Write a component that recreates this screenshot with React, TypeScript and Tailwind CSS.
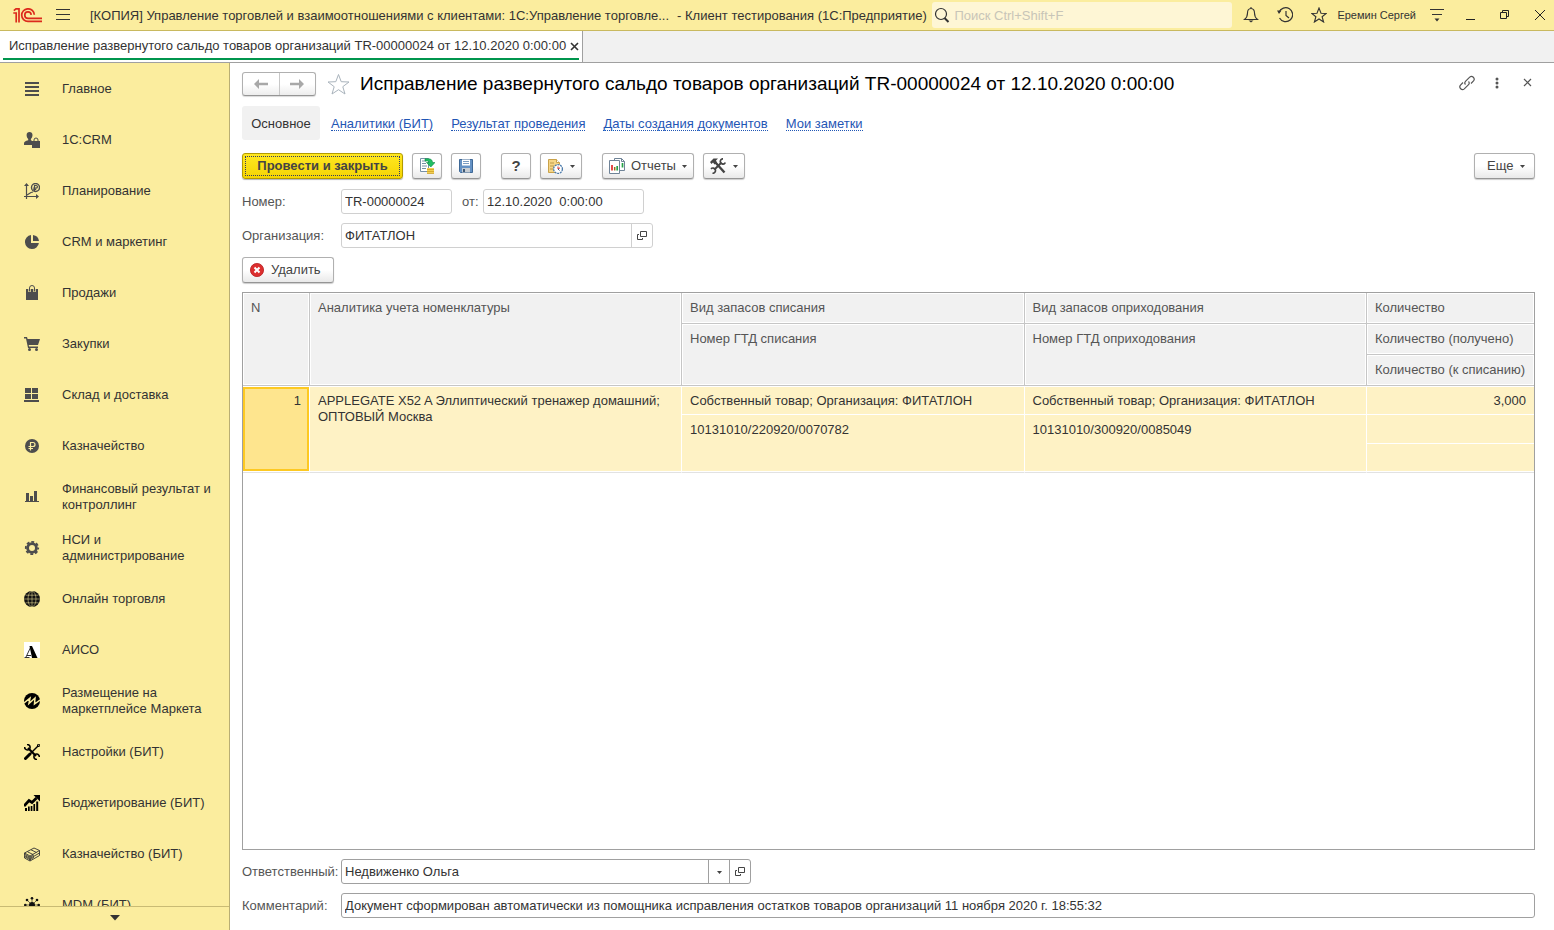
import type { ReactNode } from "react";

const ink = "#4d4d4d";

function Svg({ children, w = 16, h = 16 }: { children: ReactNode; w?: number; h?: number }) {
  return (
    <svg width={w} height={h} viewBox={`0 0 ${w} ${h}`} fill="none" className="shrink-0" aria-hidden="true">
      {children}
    </svg>
  );
}

const sections: { label: string; icon: ReactNode }[] = [
  {
    label: "Главное",
    icon: <path d="M1 1h14v2H1zM1 5h14v2H1zM1 9h14v2H1zM1 13h14v2H1z" fill={ink} />,
  },
  {
    label: "1С:CRM",
    icon: (
      <>
        <path d="M5.500 0C7.300 0 8.500 1.200 8.500 3S7.600 6.300 6.900 7v1.300l1.100.5V13H0v-1.600C0 9.800 1.500 9 4.200 8.300V7C3.400 6.300 2.600 4.800 2.600 3S3.800 0 5.500 0z" fill={ink} />
        <path d="M8 9h8v7H8z" fill={ink} />
        <path d="M10 10V8a2 2 0 0 1 4 0v2" stroke={ink} />
      </>
    ),
  },
  {
    label: "Планирование",
    icon: (
      <>
        <path d="M2.500 16V2M0 13.500h14M3 12l4-2.500 2-.5" stroke={ink} strokeWidth="1.200" />
        <path d="M0 3l2.500-3L5 3zM12 11l3 2.500-3 2.500z" fill={ink} />
        <circle cx="11.500" cy="4.500" r="4" stroke={ink} strokeWidth="1.400" />
        <path d="M10.500 8V2.500h1.600a1.300 1.300 0 0 1 0 2.700H9.200M9.200 6.500h3" stroke={ink} strokeWidth="1.200" />
      </>
    ),
  },
  {
    label: "CRM и маркетинг",
    icon: (
      <>
        <path d="M7 1.100V9h7.900A7 7 0 1 1 7 1.100z" fill={ink} />
        <path d="M9 1a7 7 0 0 1 6 6H9z" fill={ink} />
      </>
    ),
  },
  {
    label: "Продажи",
    icon: (
      <>
        <path d="M2 4h12v11H2z" fill={ink} />
        <path d="M5.500 7V3a2.500 2.500 0 0 1 5 0V7" stroke="#fbed9e" strokeWidth="2.400" />
        <path d="M5.500 6.500V3a2.500 2.500 0 0 1 5 0v3.500" stroke={ink} />
      </>
    ),
  },
  {
    label: "Закупки",
    icon: (
      <>
        <path d="M0 1h3l.6 2H16l-2 6H4.700l.4 1.500H14V12H4L2 2.500H0z" fill={ink} />
        <circle cx="5.500" cy="13.500" r="1.500" fill={ink} />
        <circle cx="12.500" cy="13.500" r="1.500" fill={ink} />
      </>
    ),
  },
  {
    label: "Склад и доставка",
    icon: <path d="M1 1h6v5H1zM8 1h6v5H8zM1 7h6v5H1zM8 7h6v5H8zM0 13h15v2H0z" fill={ink} />,
  },
  {
    label: "Казначейство",
    icon: (
      <>
        <circle cx="8" cy="8" r="7" fill={ink} />
        <path d="M6.500 12.500V4.500H9a2 2 0 0 1 0 4H4.500M4.500 10.500H9" stroke="#fbed9e" strokeWidth="1.200" />
      </>
    ),
  },
  {
    label: "Финансовый результат и контроллинг",
    icon: <path d="M2 4h3v8H2zM6 7h3v5H6zM10 2h3v10h-3zM1 12h14v1H1z" fill={ink} />,
  },
  {
    label: "НСИ и администрирование",
    icon: (
      <>
        <circle cx="8" cy="8" r="4.400" stroke={ink} strokeWidth="2.800" />
        <circle cx="8" cy="8" r="6.200" stroke={ink} strokeWidth="1.800" strokeDasharray="2.900 1.970" strokeDashoffset="1.450" />
      </>
    ),
  },
  {
    label: "Онлайн торговля",
    icon: (
      <>
        <circle cx="8" cy="8" r="8" fill="#111" />
        <path d="M0 8h16M1.500 4.200h13M1.500 11.800h13M8 0v16" stroke="#fbed9e" strokeWidth=".5" />
        <ellipse cx="8" cy="8" rx="4" ry="7.800" stroke="#fbed9e" strokeWidth=".5" />
      </>
    ),
  },
  {
    label: "АИСО",
    icon: (
      <>
        <path d="M0 0h16v16H0z" fill="#fff" />
        <path d="M5.500 4H8l5.500 12H8z" fill="#000" />
        <path d="M6.500 5.500L2 15M.5 15.500h5M3 13.500h4" stroke="#000" strokeWidth=".8" />
      </>
    ),
  },
  {
    label: "Размещение на маркетплейсе Маркета",
    icon: (
      <>
        <circle cx="8" cy="8" r="8" fill="#000" />
        <path d="M0 10L6 5.200 5 10.500 11 5l-.5 6L16 7" stroke="#fbed9e" strokeWidth="1.500" />
      </>
    ),
  },
  {
    label: "Настройки (БИТ)",
    icon: (
      <>
        <path d="M1.500 14.500L6 10" stroke="#000" strokeWidth="3" strokeLinecap="round" />
        <path d="M6 10L14 2" stroke="#000" strokeWidth="1.500" />
        <path d="M13 1l2.500-.5L15 3z" stroke="#000" />
        <path d="M4 4l8 8" stroke="#000" strokeWidth="2.200" />
        <path d="M3 .6a2.700 2.700 0 1 1-2.300 2.400M13 15.400a2.700 2.700 0 1 1 2.300-2.400" stroke="#000" strokeWidth="1.600" />
      </>
    ),
  },
  {
    label: "Бюджетирование (БИТ)",
    icon: (
      <>
        <path d="M0 11l5-5.500 3 2L12.500 3" stroke="#000" strokeWidth="2.800" />
        <path d="M9.500 0H16v6.500z" fill="#000" />
        <path d="M1 13h2v3H1zM4 11.500h1.700V16H4zM6.700 11h1.700v5H6.700zM9.400 9h1.700v7H9.400zM12.200 6.500h2V16h-2z" fill="#000" />
      </>
    ),
  },
  {
    label: "Казначейство (БИТ)",
    icon: (
      <path
        d="M.5 7L10 2l5.500 2.500L6 10zM.5 7v2.500L6 12.500l9.500-5.500V4.500M.5 9.500V12L6 15l9.500-5.500V7M6 10v5M3.500 5.800L9 8.500M7 3.800L12.500 6.500M1 8.500l5 2.700 4-2.300M1 10.800l5 2.900 4-2.400"
        stroke="#333"
        strokeWidth=".9"
      />
    ),
  },
  {
    label: "MDM (БИТ)",
    icon: (
      <>
        <circle cx="8" cy="8" r="3" fill="#111" />
        <path d="M8 1v14M1 8h14M3 3l10 10M13 3L3 13" stroke="#111" strokeWidth=".6" />
        <circle cx="8" cy="1.300" r="1.300" fill="#111" />
        <circle cx="3" cy="3" r="1.300" fill="#111" />
        <circle cx="13" cy="3" r="1.300" fill="#111" />
        <circle cx="1.300" cy="8" r="1.300" fill="#111" />
        <circle cx="14.700" cy="8" r="1.300" fill="#111" />
      </>
    ),
  },
];

const buttonBase =
  "flex h-[26px] items-center rounded-[3px] border border-[#b0b0b0] border-b-[#959595] bg-linear-to-b from-white from-50% to-[#e9e9e9] text-[#444] shadow-[0_1px_1px_rgba(0,0,0,0.2)]";

function Caret() {
  return (
    <Svg w={7} h={6}>
      <path d="M1 2h5L3.500 5z" fill="#444" />
    </Svg>
  );
}

function OpenIcon() {
  return (
    <Svg w={10} h={10}>
      <path d="M3.500.5h6v5h-6zM2 3.500H.5v5h5V7" stroke="#444" />
    </Svg>
  );
}

function TitleBar() {
  return (
    <header className="flex h-[31px] shrink-0 items-center border-b border-[#c9b95f] bg-[#fbed9e] pl-[13px] pr-2 text-[#333]">
      <Svg w={30} h={15}>
        <path d="M.3 5h2.900v9.500M.8 2.600L3 .9h3v13.600M21.300 6.800A6.300 6.300 0 1 0 15 13.400h14M18.200 6.900A3.200 3.200 0 1 0 15 10.300h14" stroke="#dc2a1c" strokeWidth="1.700" />
      </Svg>
      <button type="button" aria-label="Меню" className="ml-[13px] mr-5">
        <Svg w={14} h={12}>
          <path d="M0 .5h14M0 5.500h14M0 10.500h14" stroke="#333" />
        </Svg>
      </button>
      <div className="flex gap-2 whitespace-nowrap pt-[2px]">
        <p>[КОПИЯ] Управление торговлей и взаимоотношениями с клиентами: 1С:Управление торговле...</p>
        <p>- Клиент тестирования (1С:Предприятие)</p>
      </div>
      <label className="ml-auto flex h-[26px] w-[300px] items-center gap-1 rounded-[3px] bg-[#fef6d5] pl-[2px]">
        <Svg>
          <circle cx="7" cy="7" r="5.500" stroke="#333" strokeWidth="1.200" />
          <path d="M10.500 11l4 4" stroke="#333" strokeWidth="2" />
        </Svg>
        <input
          type="search"
          aria-label="Поиск"
          placeholder="Поиск Ctrl+Shift+F"
          className="min-w-0 flex-1 bg-transparent pt-px outline-none placeholder:text-[#c8c5b8]"
        />
      </label>
      <div className="ml-[11px] flex items-center">
        <button type="button" aria-label="Уведомления">
          <Svg>
            <path d="M8 1.500c-2.500 0-3.500 2-3.500 4.500 0 3-1 5-3 6.500h13c-2-1.500-3-3.500-3-6.500 0-2.500-1-4.500-3.500-4.500zM8 0v2" stroke="#333" strokeWidth="1.100" />
            <path d="M5.500 13.500h5L8 15.500z" fill="#333" />
          </Svg>
        </button>
        <button type="button" aria-label="История" className="ml-[18px]">
          <Svg>
            <path d="M2 5.500a7 7 0 1 1 .5 5.500M9 4v4.500l3 2.500" stroke="#333" strokeWidth="1.200" />
            <path d="M0 3.500h4.500L2 7z" fill="#333" />
          </Svg>
        </button>
        <button type="button" aria-label="Избранное" className="ml-[18px]">
          <Svg>
            <path d="M8 1l2 5.200 5.200.2-4.100 3.300 1.500 5.300L8 12l-4.600 3 1.500-5.300L.8 6.400 6 6.200z" stroke="#333" strokeWidth="1.100" />
          </Svg>
        </button>
        <button type="button" className="ml-[10px] text-[11px]">Еремин Сергей</button>
        <button type="button" aria-label="Сервис" className="ml-[14px]">
          <Svg w={14} h={14}>
            <path d="M0 1.500h14M2 6.500h10" stroke="#333" strokeWidth="1.200" />
            <path d="M4.500 10.500h5L7 13.500z" fill="#333" />
          </Svg>
        </button>
        <button type="button" aria-label="Свернуть" className="ml-[22px]">
          <Svg w={10} h={10}>
            <path d="M0 9.500h9" stroke="#222" />
          </Svg>
        </button>
        <button type="button" aria-label="Восстановить" className="ml-6">
          <Svg w={10} h={10}>
            <path d="M.5 2.500h6v6h-6zM2.500 2.500v-2h6v6h-2" stroke="#222" />
          </Svg>
        </button>
        <button type="button" aria-label="Закрыть" className="ml-6">
          <Svg w={12} h={12}>
            <path d="M1 1l10 10M11 1L1 11" stroke="#222" />
          </Svg>
        </button>
      </div>
    </header>
  );
}

function TabStrip() {
  return (
    <div className="flex h-8 shrink-0 border-b border-[#a0a0a0] bg-[#f1f1f1]">
      <div className="flex w-[583px] border-r border-[#a0a0a0] bg-white px-[3px] pb-[2px]">
        <div className="flex flex-1 items-center border-b-2 border-[#00954d] pl-[6px] pt-[3px]">
          <span className="flex-1 whitespace-nowrap text-[#333]">
            Исправление развернутого сальдо товаров организаций TR-00000024 от 12.10.2020 0:00:00
          </span>
          <button type="button" aria-label="Закрыть вкладку">
            <Svg w={9} h={9}>
              <path d="M1 1l7 7M8 1L1 8" stroke="#333" strokeWidth="1.600" />
            </Svg>
          </button>
        </div>
      </div>
    </div>
  );
}

function Sidebar() {
  return (
    <nav className="flex w-[230px] shrink-0 flex-col border-r border-[#b9ae74] bg-[#fbed9e] text-[#333]">
      <ul className="min-h-0 flex-1 overflow-hidden pt-px">
        {sections.map((s) => (
          <li key={s.label}>
            <a href="#" className="flex h-[51px] items-center gap-[22px] pb-px pl-6 pr-4 leading-4">
              <Svg>{s.icon}</Svg>
              <span>{s.label}</span>
            </a>
          </li>
        ))}
      </ul>
      <button type="button" aria-label="Прокрутить вниз" className="flex h-6 shrink-0 items-center justify-center border-t border-[#c9bb74] pb-[2px]">
        <Svg w={10} h={6}>
          <path d="M0 0h10L5 5.500z" fill="#333" />
        </Svg>
      </button>
    </nav>
  );
}

function FormHeader() {
  return (
    <div className="flex h-[25px] items-center">
      <div className="flex h-6 w-[74px] divide-x divide-[#c8c8c8] rounded-[3px] border border-[#b0b0b0] border-b-[#959595] bg-linear-to-b from-white from-50% to-[#ededed] shadow-[0_1px_1px_rgba(0,0,0,0.15)]">
        <button type="button" aria-label="Назад" className="flex flex-1 items-center justify-center">
          <Svg w={14} h={10}>
            <path d="M0 5l5-5v3.700h9v2.600H5V10z" fill="#a8a8a8" />
          </Svg>
        </button>
        <button type="button" aria-label="Вперед" className="flex flex-1 items-center justify-center">
          <Svg w={14} h={10}>
            <path d="M14 5L9 0v3.700H0v2.600h9V10z" fill="#a8a8a8" />
          </Svg>
        </button>
      </div>
      <button type="button" aria-label="В избранное" className="ml-[11px]">
        <Svg w={23} h={22}>
          <path d="M11.500 1.500l2.700 7.200 7.800.3-6.200 4.700 2.200 7.300-6.500-4.300L5 21l2.200-7.300L1 9l7.800-.3z" stroke="#a9b3bc" />
        </Svg>
      </button>
      <h1 className="ml-[10px] whitespace-nowrap text-[19px] text-black">
        Исправление развернутого сальдо товаров организаций TR-00000024 от 12.10.2020 0:00:00
      </h1>
      <div className="ml-auto flex items-center pb-[2px] pr-[3px]">
        <button type="button" aria-label="Ссылка">
          <Svg>
            <path d="M6.500 9.500C5.300 8.300 5.800 7 6.700 6.100l4-4a2.700 2.700 0 0 1 3.800 3.800L12 8.500M9.500 6.500c1.200 1.200.7 2.500-.2 3.400l-4 4a2.700 2.700 0 0 1-3.800-3.800L4 7.500" stroke="#555" strokeWidth="1.200" />
          </Svg>
        </button>
        <button type="button" aria-label="Действия" className="ml-5">
          <Svg w={4} h={12}>
            <circle cx="2" cy="2" r="1.500" fill="#555" />
            <circle cx="2" cy="6" r="1.500" fill="#555" />
            <circle cx="2" cy="10" r="1.500" fill="#555" />
          </Svg>
        </button>
        <button type="button" aria-label="Закрыть форму" className="ml-6">
          <Svg w={9} h={9}>
            <path d="M1 1l7 7M8 1L1 8" stroke="#555" strokeWidth="1.200" />
          </Svg>
        </button>
      </div>
    </div>
  );
}

const links = ["Аналитики (БИТ)", "Результат проведения", "Даты создания документов", "Мои заметки"];

function FormTabs() {
  return (
    <nav className="mt-[10px] flex h-[34px] items-center">
      <a href="#" className="mr-[11px] flex h-[34px] w-[78px] items-center justify-center rounded-[3px] bg-[#f1f1f1] pt-[2px] text-[#333]">
        Основное
      </a>
      <div className="flex gap-[18px] pt-[2px]">
        {links.map((l) => (
          <a key={l} href="#" className="whitespace-nowrap border-b border-dotted border-[#1f56b5] leading-[13px] text-[#1f56b5]">
            {l}
          </a>
        ))}
      </div>
    </nav>
  );
}

function Toolbar() {
  return (
    <div className="mt-[13px] flex h-[27px] items-start gap-[9px]">
      <button
        type="button"
        className="h-[26px] w-[161px] rounded-[3px] border border-[#b39b00] bg-linear-to-b from-[#ffe81f] to-[#f5d400] p-[2px] font-bold text-[#444] shadow-[0_1px_1px_rgba(0,0,0,0.3)]"
      >
        <span className="flex h-full items-center justify-center border border-dotted border-[#333a66]">Провести и закрыть</span>
      </button>
      <button type="button" aria-label="Провести" className={`${buttonBase} w-[30px] justify-center`}>
        <Svg>
          <path d="M1.500.5h8v13h-8z" fill="#fff" stroke="#7790a6" />
          <path d="M3 3h4M3 5.500h4M3 8h5M3 10.500h4" stroke="#7790a6" />
          <path d="M6 .8h3.500c2.500 0 4 1.500 4 3.700h2.500L11.800 9 7.500 4.500h2.500c0-1-.6-1.500-1.600-1.500H6z" fill="#1fbf62" stroke="#0b8a45" strokeWidth=".6" />
          <path d="M8 10h7v5.500H8z" fill="#f2cf52" />
          <path d="M8 11.500h7M8 13.500h7M8 15.500h7" stroke="#c99a1e" strokeWidth=".7" />
        </Svg>
      </button>
      <button type="button" aria-label="Записать" className={`${buttonBase} w-[30px] justify-center`}>
        <Svg>
          <path d="M1.500 1.500h13v13h-12l-1-1z" fill="#6491c4" stroke="#3e6896" />
          <path d="M4 1.500h8v6H4z" fill="#fff" />
          <path d="M5 3.500h6M5 5.500h6" stroke="#7a9cc2" />
          <path d="M4 10h8v4.500H4z" fill="#c7cdd3" />
          <path d="M5 11h2v3H5z" fill="#3e5874" />
        </Svg>
      </button>
      <button type="button" aria-label="Справка" className={`${buttonBase} ml-[11px] w-[30px] justify-center text-[15px] font-bold text-[#222]`}>
        ?
      </button>
      <button type="button" aria-label="Отложить" className={`${buttonBase} w-[42px] gap-[6px] pl-[6px]`}>
        <Svg>
          <path d="M1.500 1.500h8l3 3v10h-11z" fill="#f5d586" stroke="#c9a24a" />
          <path d="M9.500 1.500v3h3" fill="#fff" stroke="#c9a24a" />
          <path d="M3 5h4M3 8h4M3 11h3" stroke="#bd9a49" />
          <circle cx="11" cy="11" r="4.400" fill="#fff" stroke="#4c7bab" strokeDasharray="2 .8" strokeWidth="1.300" />
          <path d="M11 8.500V11l2-1.200" stroke="#d5302a" />
          <path d="M11 11l1.500 1.500" stroke="#335c88" />
        </Svg>
        <Caret />
      </button>
      <button type="button" className={`${buttonBase} ml-[11px] w-[92px] pl-[6px]`}>
        <Svg>
          <path d="M5.500.5h7l3 3v9h-10z" fill="#fff" stroke="#6f8397" />
          <path d="M12.500.5v3h3" stroke="#6f8397" />
          <path d="M.5 2.500h10v13H.5z" fill="#fff" stroke="#6f8397" />
          <path d="M3 7v5.500" stroke="#e02b2b" strokeWidth="1.700" />
          <path d="M5.700 9v3.500" stroke="#9c6b20" strokeWidth="1.500" />
          <path d="M8.200 8v4.500M13.500 5v4.500" stroke="#25a247" strokeWidth="1.700" />
        </Svg>
        <span className="ml-[6px] mr-[5px]">Отчеты</span>
        <Caret />
      </button>
      <button type="button" aria-label="Инструменты" className={`${buttonBase} w-[42px] gap-[6px] pl-[6px]`}>
        <Svg>
          <path d="M5 4l9.500 10.500" stroke="#444" strokeWidth="2.400" />
          <path d="M0 4l3.500-3.500H8L6 2.500 7 5 4.500 6.500 3 4.500 1.500 6z" fill="#444" />
          <path d="M4.500 11.500l7-7" stroke="#444" strokeWidth="2" />
          <path d="M13 .8a2.600 2.600 0 1 0 2.300 3.700M1 10.800a2.600 2.600 0 1 1 1.500 4.400" stroke="#444" strokeWidth="1.700" />
        </Svg>
        <Caret />
      </button>
      <button type="button" className={`${buttonBase} ml-auto w-[61px] gap-[6px] pl-3`}>
        Еще
        <Caret />
      </button>
    </div>
  );
}

const field = "h-[25px] rounded-[3px] border border-[#d0d0d0] bg-white px-[3px] text-[#333] outline-none";

function Details() {
  return (
    <div className="mt-[9px] flex flex-col gap-[9px] text-[#555]">
      <div className="flex items-center">
        <label htmlFor="number" className="w-[99px]">Номер:</label>
        <input id="number" defaultValue="TR-00000024" className={`${field} w-[111px]`} />
        <label htmlFor="date" className="ml-[10px] w-[21px]">от:</label>
        <input id="date" defaultValue="12.10.2020  0:00:00" className={`${field} w-[161px]`} />
      </div>
      <div className="flex items-center">
        <label htmlFor="organization" className="w-[99px]">Организация:</label>
        <div className="flex h-[25px] w-[312px] divide-x divide-[#d0d0d0] rounded-[3px] border border-[#d0d0d0]">
          <input id="organization" defaultValue="ФИТАТЛОН" className="min-w-0 flex-1 bg-transparent px-[3px] text-[#333] outline-none" />
          <button type="button" aria-label="Открыть организацию" className="flex w-5 items-center justify-center">
            <OpenIcon />
          </button>
        </div>
      </div>
      <button type="button" className={`${buttonBase} w-[92px] gap-[6px] pl-[6px]`}>
        <Svg>
          <circle cx="8" cy="8" r="6.600" fill="#dc2f2f" stroke="#b81f22" strokeWidth=".8" />
          <path d="M5.500 5.500l5 5M10.500 5.500l-5 5" stroke="#fff" strokeWidth="2" />
        </Svg>
        Удалить
      </button>
    </div>
  );
}

const th = "h-[31px] border-b border-r border-[#c6c6c6] bg-[#f1f1f1] px-2 pt-[7px] text-left align-top font-normal leading-4 shadow-[inset_0_0_0_1px_#fff]";
const thLast = "h-[31px] border-b border-[#c6c6c6] bg-[#f1f1f1] px-2 pt-[7px] text-left align-top font-normal leading-4 whitespace-nowrap shadow-[inset_0_0_0_1px_#fff]";
const td = "h-[29px] border-r border-white bg-[#fef2c5] px-2 align-top leading-4";

function StockTable() {
  return (
    <div className="mt-[9px] min-h-0 flex-1 overflow-hidden border border-[#a0a0a0] bg-white">
      <table className="w-full table-fixed border-separate border-spacing-0 text-[#333]">
        <colgroup>
          <col className="w-[67px]" />
          <col className="w-[372px]" />
          <col />
          <col />
          <col className="w-[167px]" />
        </colgroup>
        <thead className="text-[#555]">
          <tr>
            <th rowSpan={3} className={th}>N</th>
            <th rowSpan={3} className={th}>Аналитика учета номенклатуры</th>
            <th className={th}>Вид запасов списания</th>
            <th className={th}>Вид запасов оприходования</th>
            <th className={thLast}>Количество</th>
          </tr>
          <tr>
            <th rowSpan={2} className={th}>Номер ГТД списания</th>
            <th rowSpan={2} className={th}>Номер ГТД оприходования</th>
            <th className={thLast}>Количество (получено)</th>
          </tr>
          <tr>
            <th className={thLast}>Количество (к списанию)</th>
          </tr>
        </thead>
        <tbody>
          <tr>
            <td
              rowSpan={3}
              className="border-b border-r border-t border-b-[#e2e2e2] border-r-white border-t-white bg-white pb-px align-top leading-4"
            >
              <div className="h-[84px] border-2 border-[#fdc922] bg-[#fee58e] pr-[6px] pt-[4px] text-right">1</div>
            </td>
            <td rowSpan={3} className={`${td} border-b border-t border-b-[#e2e2e2] pt-[6px] shadow-[inset_0_-1px_0_#fff]`}>
              APPLEGATE X52 A Эллиптический тренажер домашний; ОПТОВЫЙ Москва
            </td>
            <td className={`${td} border-b border-t pt-[6px]`}>Собственный товар; Организация: ФИТАТЛОН</td>
            <td className={`${td} border-b border-t pt-[6px]`}>Собственный товар; Организация: ФИТАТЛОН</td>
            <td className={`${td} border-b border-r-0 border-t pt-[6px] text-right`}>3,000</td>
          </tr>
          <tr>
            <td rowSpan={2} className={`${td} border-b border-b-[#e2e2e2] pt-[7px] shadow-[inset_0_-1px_0_#fff]`}>10131010/220920/0070782</td>
            <td rowSpan={2} className={`${td} border-b border-b-[#e2e2e2] pt-[7px] shadow-[inset_0_-1px_0_#fff]`}>10131010/300920/0085049</td>
            <td className={`${td} border-b border-r-0`} />
          </tr>
          <tr>
            <td className={`${td} border-b border-r-0 border-b-[#e2e2e2] shadow-[inset_0_-1px_0_#fff]`} />
          </tr>
        </tbody>
      </table>
    </div>
  );
}

function Footer() {
  return (
    <div className="mt-[9px] flex flex-col gap-[9px] text-[#555]">
      <div className="flex items-center">
        <label htmlFor="responsible" className="w-[99px]">Ответственный:</label>
        <div className="flex h-[25px] w-[410px] divide-x divide-[#a0a0a0] rounded-[3px] border border-[#a0a0a0]">
          <input id="responsible" defaultValue="Недвиженко Ольга" className="min-w-0 flex-1 bg-transparent px-[3px] text-[#333] outline-none" />
          <button type="button" aria-label="Выбрать" className="flex w-[21px] items-center justify-center">
            <Caret />
          </button>
          <button type="button" aria-label="Открыть ответственного" className="flex w-5 items-center justify-center">
            <OpenIcon />
          </button>
        </div>
      </div>
      <div className="flex items-center">
        <label htmlFor="comment" className="w-[99px]">Комментарий:</label>
        <input
          id="comment"
          defaultValue="Документ сформирован автоматически из помощника исправления остатков товаров организаций 11 ноября 2020 г. 18:55:32"
          className="h-[25px] min-w-0 flex-1 rounded-[3px] border border-[#a0a0a0] bg-white px-[3px] text-[#333] outline-none"
        />
      </div>
    </div>
  );
}

export default function App() {
  return (
    <div className="flex h-screen flex-col overflow-hidden bg-white font-['Liberation_Sans',Arial,sans-serif] text-[13px] leading-4">
      <TitleBar />
      <TabStrip />
      <div className="flex min-h-0 flex-1">
        <Sidebar />
        <main className="flex min-w-0 flex-1 flex-col pb-3 pl-3 pr-[19px] pt-2">
          <FormHeader />
          <FormTabs />
          <Toolbar />
          <Details />
          <StockTable />
          <Footer />
        </main>
      </div>
    </div>
  );
}
